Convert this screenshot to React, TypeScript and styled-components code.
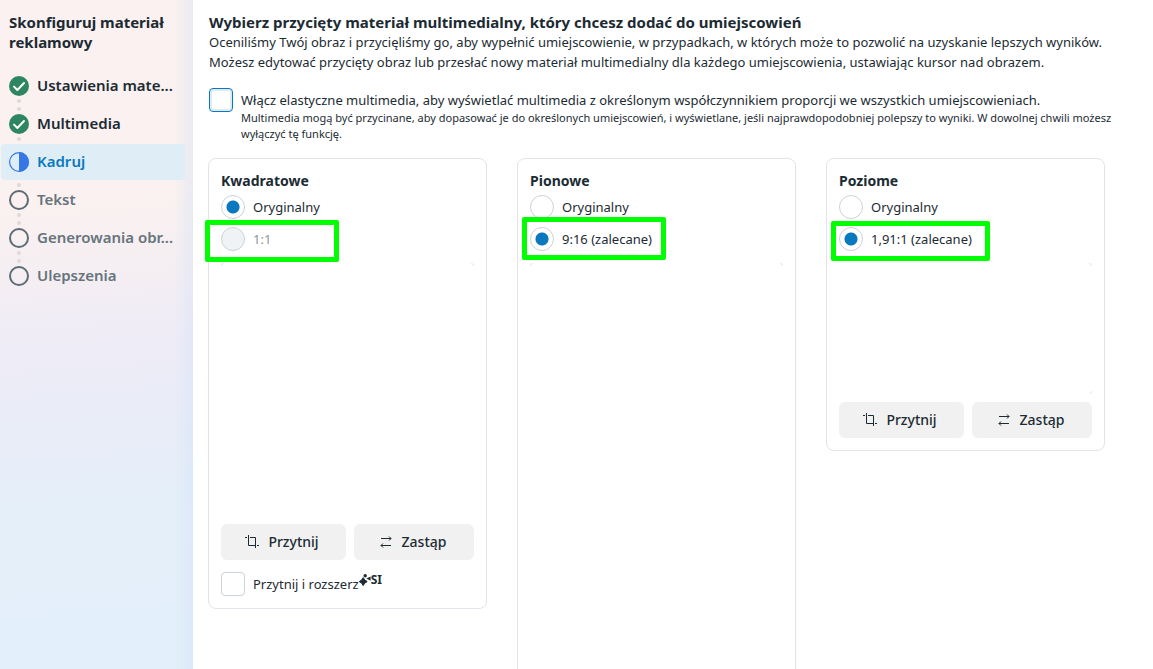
import React, { useId, useState } from "react";
import styled, { createGlobalStyle, css } from "styled-components";

const INK = "#1c2b33";
const BLUE = "#0a78be";

const GlobalStyle = createGlobalStyle`
  *, *::before, *::after { box-sizing: border-box; }
  body {
    margin: 0;
    background: #fff;
    color: ${INK};
    font-family: "Noto Sans", "Open Sans", sans-serif;
    font-size: 13px;
    line-height: 20px;
  }
`;

const Page = styled.div`
  display: flex;
  height: 100vh;
  overflow: hidden;
`;

/* ---------- sidebar ---------- */

const Sidebar = styled.aside`
  flex: 0 0 193px;
  padding: 12px 8px 0 1px;
  background:
    linear-gradient(to right, rgba(208, 224, 246, 0) 174px, rgba(208, 224, 246, 0.4) 193px),
    linear-gradient(176deg, #faf1f0 0%, #faf1f0 30%, #f4eef3 42%, #eeecf7 52%, #e9edf8 64%, #e4effa 76%, #e3effa 100%);
`;

const SidebarTitle = styled.h2`
  margin: 0 0 16px;
  padding-left: 8px;
  font-size: 15px;
  line-height: 20px;
  font-weight: 700;
`;

const Steps = styled.ol`
  display: flex;
  flex-direction: column;
  gap: 2px;
  margin: 0;
  padding: 0;
  list-style: none;
`;

type StepState = "done" | "current" | "todo";

const stepColor = { done: INK, current: BLUE, todo: "#67747c" };

const StepButton = styled.button<{ $state: StepState }>`
  display: flex;
  align-items: center;
  gap: 8px;
  width: 100%;
  height: 36px;
  padding: 0 8px;
  border: 0;
  border-radius: 4px;
  background: ${(p) => (p.$state === "current" ? "#dfedf7" : "transparent")};
  color: ${(p) => stepColor[p.$state]};
  font: inherit;
  font-size: 15px;
  font-weight: 600;
  text-align: left;
  white-space: nowrap;
  cursor: pointer;
`;

const StepLabel = styled.span`
  padding-bottom: 2px;
`;

const StepRail = styled.span`
  display: flex;
  flex-direction: column;
  justify-content: space-between;
  align-items: center;
  height: 36px;
  padding: 1px 0;

  svg { display: block; }
`;

const RailDot = styled.span<{ $shown: boolean }>`
  width: 4px;
  height: 4px;
  border-radius: 50%;
  background: ${(p) => (p.$shown ? "#dfd8da" : "transparent")};
`;

/* ---------- main column ---------- */

const Main = styled.main`
  flex: 1;
  min-width: 0;
  padding: 12px 0 0;
`;

const Intro = styled.header`
  padding: 0 8px 0 16px;
`;

const Title = styled.h1`
  margin: 0;
  font-size: 15px;
  line-height: 20px;
  font-weight: 700;
`;

const Lead = styled.p`
  margin: 0;
  font-size: 13px;
`;

const FlexOption = styled.div`
  display: flex;
  gap: 8px;
  padding: 16px 8px 0 16px;
`;

const FlexText = styled.div`
  padding-top: 2px;
`;

const FlexLabel = styled.label`
  display: block;
  font-size: 13px;
  line-height: 20px;
`;

const Hint = styled.p`
  margin: 0;
  font-size: 11px;
  line-height: 16px;
`;

const CheckBox = styled.input<{ $active?: boolean }>`
  appearance: none;
  flex: none;
  width: 24px;
  height: 24px;
  margin: 0;
  border: 1px solid #cbd2d9;
  border-radius: 4px;
  background: #fff;

  ${(p) =>
    p.$active &&
    css`
      border-color: ${BLUE};
      box-shadow: inset 0 0 0 2px #dcebf6;
    `}
  &:checked { background: ${BLUE}; }
`;

const Cards = styled.section`
  display: grid;
  grid-template-columns: repeat(3, minmax(0, 1fr));
  align-items: start;
  gap: 30px;
  padding: 16px 48px 0 15px;
`;

const Card = styled.fieldset`
  display: flex;
  flex-direction: column;
  gap: 8px;
  min-width: 0;
  margin: 0;
  padding: 12px;
  border: 1px solid #e3e4ea;
  border-radius: 8px;
`;

const CardTitle = styled.h3`
  margin: 0 0 -4px;
  font-size: 14px;
  line-height: 20px;
  font-weight: 700;
`;

const Option = styled.label<{ $muted?: boolean }>`
  position: relative;
  display: flex;
  align-items: center;
  gap: 8px;
  height: 24px;
  font-size: 13px;
  color: ${(p) => (p.$muted ? "#8d959b" : INK)};
`;

const Radio = styled.input`
  appearance: none;
  flex: none;
  width: 24px;
  height: 24px;
  margin: 0;
  border: 1px solid #cbd2d9;
  border-radius: 50%;
  background: #fff;

  &:checked { background: radial-gradient(circle, ${BLUE} 6px, #fff 7px); }
  &:disabled { background: #f0f3f6; }
`;

interface MarkBox { left: number; top: number; width: number; height: number }

/* Green annotation frame lying over a recommended option. */
const Mark = styled.span<{ $box: MarkBox }>`
  position: absolute;
  left: ${(p) => p.$box.left}px;
  top: ${(p) => p.$box.top}px;
  width: ${(p) => p.$box.width}px;
  height: ${(p) => p.$box.height}px;
  border: 5px solid #00ff00;
  border-radius: 2px;
  pointer-events: none;
`;

const Media = styled.div<{ $ratio: string }>`
  display: grid;
  grid-template-columns: auto auto;
  justify-content: space-between;
  align-content: space-between;
  margin-top: 4px;
  aspect-ratio: ${(p) => p.$ratio};
`;

const Corner = styled.span<{ $side: "tl" | "tr" | "bl" | "br"; $shown: boolean }>`
  width: 3px;
  height: 3px;
  border: 0 solid ${(p) => (p.$shown ? "#eaebed" : "transparent")};
  ${(p) => (p.$side[0] === "t" ? "border-top-width: 1px;" : "border-bottom-width: 1px;")}
  ${(p) => (p.$side[1] === "l" ? "border-left-width: 1px;" : "border-right-width: 1px;")}
  ${(p) => p.$side === "tl" && "border-top-left-radius: 3px;"}
  ${(p) => p.$side === "tr" && "border-top-right-radius: 3px;"}
  ${(p) => p.$side === "bl" && "border-bottom-left-radius: 3px;"}
  ${(p) => p.$side === "br" && "border-bottom-right-radius: 3px;"}
`;

const Actions = styled.div`
  display: grid;
  grid-template-columns: 125fr 120fr;
  gap: 8px;
`;

const ActionButton = styled.button`
  display: flex;
  align-items: center;
  justify-content: center;
  gap: 8px;
  height: 36px;
  padding: 0 4px 0 0;
  border: 0;
  border-radius: 6px;
  background: #f1f1f1;
  color: ${INK};
  font: inherit;
  font-size: 14px;
  font-weight: 500;
  cursor: pointer;
`;

const Extend = styled.label`
  display: flex;
  align-items: center;
  margin-top: 4px;
  height: 24px;
  font-size: 13px;

  ${CheckBox} { margin-right: 8px; }
`;

const AiTag = styled.span`
  display: flex;
  align-items: center;
  align-self: flex-start;
  font-size: 12px;
  line-height: 16px;
  font-weight: 700;
`;

/* ---------- icons ---------- */

const StepIcon = ({ state }: { state: StepState }) => (
  <svg width="20" height="20" viewBox="0 0 20 20" fill="none" aria-hidden="true">
    {state === "done" && (
      <>
        <circle cx="10" cy="10" r="10" fill="#2e8562" />
        <path d="M5 10.6 8.4 14 15 7" stroke="#fff" strokeWidth="2" strokeLinecap="round" strokeLinejoin="round" />
      </>
    )}
    {state === "current" && (
      <>
        <circle cx="10" cy="10" r="9.4" stroke="#3578e5" strokeWidth="1.2" />
        <path d="M10 0a10 10 0 0 1 0 20Z" fill="#3578e5" />
      </>
    )}
    {state === "todo" && <circle cx="10" cy="10" r="9" stroke="#5f6b76" strokeWidth="2" />}
  </svg>
);

const CropIcon = () => (
  <svg width="16" height="16" viewBox="0 0 16 16" fill="none" stroke={INK} strokeWidth="1" aria-hidden="true">
    <path d="M1 3.5h2M4.5 1v10.5h6.5M6 3.5h5.5V14M13 11.5h2" />
  </svg>
);

const SwapIcon = () => (
  <svg width="16" height="16" viewBox="0 0 16 16" fill="none" stroke={INK} strokeWidth="1" aria-hidden="true">
    <path d="M3 4.5h10M11 2.5l2 2-2 2M13 11.5H3M5 9.5l-2 2 2 2" />
  </svg>
);

const SparkIcon = () => (
  <svg width="12" height="12" viewBox="0 0 12 12" fill={INK} aria-hidden="true">
    <path d="M4.2 3.6Q5.2 6.4 8.2 7.6Q5.2 8.8 4.2 11.6Q3.2 8.8 .2 7.6Q3.2 6.4 4.2 3.6Z" stroke={INK} strokeWidth="1" strokeLinejoin="round" />
    <circle cx="6.2" cy="1.8" r="1.7" />
    <path d="M7.4 4.6 11.6 2.4V6.8Z" />
  </svg>
);

/* ---------- page ---------- */

const steps: { label: string; state: StepState }[] = [
  { label: "Ustawienia mate...", state: "done" },
  { label: "Multimedia", state: "done" },
  { label: "Kadruj", state: "current" },
  { label: "Tekst", state: "todo" },
  { label: "Generowania obr...", state: "todo" },
  { label: "Ulepszenia", state: "todo" },
];

interface Placement {
  title: string;
  crop: string;
  selected: number;
  disabled?: boolean;
  ratio: string;
  corners: string[];
  mark: MarkBox;
  actions?: boolean;
  extend?: boolean;
}

const placements: Placement[] = [
  { title: "Kwadratowe", crop: "1:1", selected: 0, disabled: true, ratio: "1 / 1", corners: ["tl", "tr"], mark: { left: -16, top: -7, width: 134, height: 42 }, actions: true, extend: true },
  { title: "Pionowe", crop: "9:16 (zalecane)", selected: 1, ratio: "9 / 16", corners: ["tl", "tr"], mark: { left: -8, top: -10, width: 144, height: 43 } },
  { title: "Poziome", crop: "1,91:1 (zalecane)", selected: 1, ratio: "1.93 / 1", corners: ["tr", "br"], mark: { left: -8, top: -6, width: 159, height: 40 }, actions: true },
];

function PlacementCard({ item }: { item: Placement }) {
  const name = useId();
  const [selected, setSelected] = useState(item.selected);
  return (
    <Card aria-label={item.title}>
      <CardTitle>{item.title}</CardTitle>
      <Option>
        <Radio type="radio" name={name} checked={selected === 0} onChange={() => setSelected(0)} />
        Oryginalny
      </Option>
      <Option $muted={item.disabled}>
        <Radio type="radio" name={name} checked={selected === 1} disabled={item.disabled} onChange={() => setSelected(1)} />
        {item.crop}
        <Mark $box={item.mark} />
      </Option>
      <Media $ratio={item.ratio}>
        {(["tl", "tr", "bl", "br"] as const).map((side) => (
          <Corner key={side} $side={side} $shown={item.corners.includes(side)} />
        ))}
      </Media>
      {item.actions && (
        <Actions>
          <ActionButton type="button"><CropIcon />Przytnij</ActionButton>
          <ActionButton type="button"><SwapIcon />Zastąp</ActionButton>
        </Actions>
      )}
      {item.extend && (
        <Extend>
          <CheckBox type="checkbox" />
          Przytnij i rozszerz
          <AiTag><SparkIcon />SI</AiTag>
        </Extend>
      )}
    </Card>
  );
}

export default function App() {
  return (
    <>
      <GlobalStyle />
      <Page>
        <Sidebar>
          <SidebarTitle>Skonfiguruj materiał reklamowy</SidebarTitle>
          <Steps>
            {steps.map((step, i) => (
              <li key={step.label}>
                <StepButton type="button" $state={step.state}>
                  <StepRail>
                    <RailDot $shown={i > 0 && step.state !== "current"} />
                    <StepIcon state={step.state} />
                    <RailDot $shown={i < steps.length - 1 && step.state !== "current"} />
                  </StepRail>
                  <StepLabel>{step.label}</StepLabel>
                </StepButton>
              </li>
            ))}
          </Steps>
        </Sidebar>
        <Main>
          <Intro>
            <Title>Wybierz przycięty materiał multimedialny, który chcesz dodać do umiejscowień</Title>
            <Lead>
              Oceniliśmy Twój obraz i przycięliśmy go, aby wypełnić umiejscowienie, w przypadkach, w których może to
              pozwolić na uzyskanie lepszych wyników.
              <br />
              Możesz edytować przycięty obraz lub przesłać nowy materiał multimedialny dla każdego umiejscowienia,
              ustawiając kursor nad obrazem.
            </Lead>
          </Intro>
          <FlexOption>
            <CheckBox id="flexible-media" type="checkbox" $active />
            <FlexText>
              <FlexLabel htmlFor="flexible-media">
                Włącz elastyczne multimedia, aby wyświetlać multimedia z określonym współczynnikiem proporcji we
                wszystkich umiejscowieniach.
              </FlexLabel>
              <Hint>
                Multimedia mogą być przycinane, aby dopasować je do określonych umiejscowień, i wyświetlane, jeśli
                najprawdopodobniej polepszy to wyniki. W dowolnej chwili możesz wyłączyć tę funkcję.
              </Hint>
            </FlexText>
          </FlexOption>
          <Cards>
            {placements.map((item) => (
              <PlacementCard key={item.title} item={item} />
            ))}
          </Cards>
        </Main>
      </Page>
    </>
  );
}
